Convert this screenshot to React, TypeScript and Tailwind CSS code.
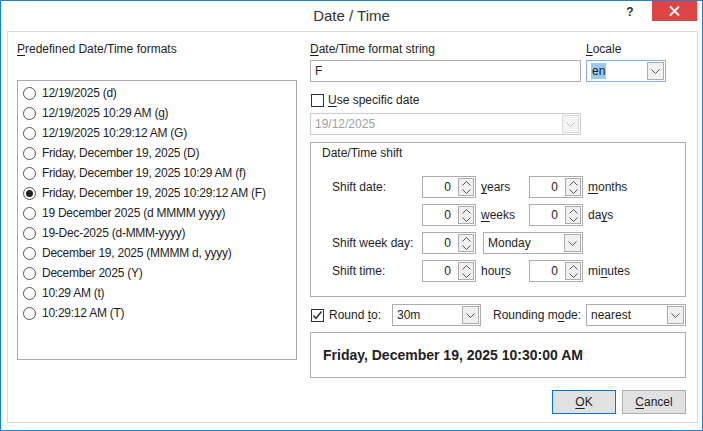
import React from "react";

const formats = [
  "12/19/2025 (d)",
  "12/19/2025 10:29 AM (g)",
  "12/19/2025 10:29:12 AM (G)",
  "Friday, December 19, 2025 (D)",
  "Friday, December 19, 2025 10:29 AM (f)",
  "Friday, December 19, 2025 10:29:12 AM (F)",
  "19 December 2025 (d MMMM yyyy)",
  "19-Dec-2025 (d-MMM-yyyy)",
  "December 19, 2025 (MMMM d, yyyy)",
  "December 2025 (Y)",
  "10:29 AM (t)",
  "10:29:12 AM (T)",
];

const U = ({ children }: { children: React.ReactNode }) => (
  <span className="underline underline-offset-[2px]">{children}</span>
);

const Chevron = ({ up = false }: { up?: boolean }) => (
  <svg width="9" height="5" viewBox="0 0 9 5">
    <path
      d={up ? "M0.5 4.5 L4.5 0.5 L8.5 4.5" : "M0.5 0.5 L4.5 4.5 L8.5 0.5"}
      fill="none"
      stroke="currentColor"
      strokeWidth="1"
    />
  </svg>
);

const Combo = ({
  value,
  className = "",
  focused = false,
  disabled = false,
}: {
  value: string;
  className?: string;
  focused?: boolean;
  disabled?: boolean;
}) => (
  <div
    className={`h-[22px] flex items-stretch border bg-white ${
      focused ? "border-[#7eb4ea]" : disabled ? "border-[#cccccc]" : "border-[#adadad]"
    } ${className}`}
  >
    <div className="flex-1 flex items-center pl-[4px]">
      <span
        className={
          focused
            ? "bg-[#99c9ef] px-[1px] leading-[16px]"
            : disabled
            ? "text-[#a0a0a0]"
            : ""
        }
      >
        {value}
      </span>
    </div>
    <div
      className={`m-px w-[17px] flex items-center justify-center border ${
        disabled
          ? "border-[#d9d9d9] bg-[#f4f4f4] text-[#bfbfbf]"
          : "border-[#adadad] bg-[#f0f0f0] text-[#555]"
      }`}
    >
      <Chevron />
    </div>
  </div>
);

const Spinner = () => (
  <div className="w-[54px] h-[22px] flex items-stretch border border-[#adadad] bg-white">
    <div className="flex-1 flex items-center justify-end pr-[6px]">0</div>
    <div className="m-px w-[16px] flex flex-col items-center justify-center gap-[3px] border border-[#adadad] bg-[#f0f0f0] text-[#555]">
      <Chevron up />
      <Chevron />
    </div>
  </div>
);

const CheckBox = ({ checked = false }: { checked?: boolean }) => (
  <div className="w-[13px] h-[13px] border border-[#333] bg-white flex items-center justify-center">
    {checked && (
      <svg width="11" height="11" viewBox="0 0 11 11">
        <path d="M1.5 5.5 L4 8.5 L9.5 1.5" fill="none" stroke="#222" strokeWidth="1.4" />
      </svg>
    )}
  </div>
);

const Radio = ({ checked = false }: { checked?: boolean }) => (
  <div className="w-[13px] h-[13px] rounded-full border border-[#555] bg-white flex items-center justify-center">
    {checked && <div className="w-[7px] h-[7px] rounded-full bg-[#222]" />}
  </div>
);

const App = () => {
  return (
    <div className="w-[703px] h-[431px] bg-white border border-[#1883d7] flex flex-col text-[12px] leading-[16px] text-[#1e1e1e] font-['Liberation_Sans',Arial,sans-serif]">
      {/* title bar */}
      <div className="h-[30px] grid grid-cols-[1fr_auto_1fr]">
        <div />
        <div className="flex items-center text-[15px] text-[#333]">Date / Time</div>
        <div className="flex justify-end items-start">
          <div className="w-[20px] h-[21px] mr-[12px] flex items-center justify-center font-bold text-[12px] text-[#333]">
            ?
          </div>
          <div className="w-[45px] h-[20px] mr-[5px] bg-[#e04343] flex items-center justify-center">
            <svg width="11" height="10" viewBox="0 0 11 10">
              <path d="M1 0.5 L10 9.5 M10 0.5 L1 9.5" stroke="white" strokeWidth="2" />
            </svg>
          </div>
        </div>
      </div>

      {/* panel */}
      <div className="ml-[6px] w-[691px] h-[392px] border border-[#dadada] bg-white flex pl-[9px] pt-[9px]">
        {/* left column */}
        <div className="w-[280px] flex flex-col">
          <div className="h-[16px]">
            <U>P</U>redefined Date/Time formats
          </div>
          <div className="mt-[23px] h-[280px] border border-[#a9a9a9] pt-[2px] pl-[5px] flex flex-col">
            {formats.map((f, i) => (
              <div key={f} className="h-[20px] flex items-center gap-[6px]">
                <Radio checked={i === 5} />
                <span className="tracking-[-0.25px]">{f}</span>
              </div>
            ))}
          </div>
        </div>

        {/* right column */}
        <div className="ml-[13px] w-[376px] flex flex-col">
          <div className="h-[16px] flex">
            <span className="w-[276px]">
              <U>D</U>ate/Time format string
            </span>
            <span>
              <U>L</U>ocale
            </span>
          </div>
          <div className="mt-[3px] flex">
            <div className="w-[271px] h-[22px] border border-[#adadad] bg-white flex items-center pl-[4px]">F</div>
            <Combo value="en" focused className="ml-[5px] w-[80px]" />
          </div>
          <div className="mt-[10px] h-[16px] flex items-center">
            <div className="ml-[1px]">
              <CheckBox />
            </div>
            <span className="ml-[4px]">
              <U>U</U>se specific date
            </span>
          </div>
          <Combo value="19/12/2025" disabled className="mt-[5px] w-[271px]" />

          {/* shift group */}
          <div className="mt-[7px] h-[155px] border border-[#adadad] flex flex-col">
            <div className="pl-[11px] pt-[2px] h-[18px]">Date/Time shift</div>
            <div className="mt-[15px] flex flex-col gap-[6px] pl-[21px]">
              <div className="h-[22px] flex items-center">
                <span className="w-[90px]">Shift date:</span>
                <Spinner />
                <span className="ml-[5px] w-[48px]">
                  <U>y</U>ears
                </span>
                <Spinner />
                <span className="ml-[5px]">
                  <U>m</U>onths
                </span>
              </div>
              <div className="h-[22px] flex items-center">
                <span className="w-[90px]" />
                <Spinner />
                <span className="ml-[5px] w-[48px]">
                  <U>w</U>eeks
                </span>
                <Spinner />
                <span className="ml-[5px]">
                  da<U>y</U>s
                </span>
              </div>
              <div className="h-[22px] flex items-center">
                <span className="w-[90px]">Shift week day:</span>
                <Spinner />
                <Combo value="Monday" className="ml-[7px] w-[100px]" />
              </div>
              <div className="h-[22px] flex items-center">
                <span className="w-[90px]">Shift time:</span>
                <Spinner />
                <span className="ml-[5px] w-[48px]">
                  hou<U>r</U>s
                </span>
                <Spinner />
                <span className="ml-[5px]">
                  mi<U>n</U>utes
                </span>
              </div>
            </div>
          </div>

          {/* rounding */}
          <div className="mt-[7px] h-[22px] flex items-center">
            <div className="ml-[1px]">
              <CheckBox checked />
            </div>
            <span className="ml-[5px] w-[63px]">
              Round <U>t</U>o:
            </span>
            <Combo value="30m" className="w-[89px]" />
            <span className="ml-[12px] w-[93px]">
              Rounding m<U>o</U>de:
            </span>
            <Combo value="nearest" className="w-[100px]" />
          </div>

          {/* result */}
          <div className="mt-[6px] h-[46px] border border-[#adadad] flex items-center pl-[12px] text-[14px] font-bold text-[#222]">
            Friday, December 19, 2025 10:30:00 AM
          </div>

          {/* buttons */}
          <div className="mt-[12px] flex justify-end gap-[6px]">
            <div className="w-[64px] h-[24px] border border-[#0078d7] bg-[#e1e1e1] flex items-center justify-center">
              <U>O</U>K
            </div>
            <div className="w-[64px] h-[24px] border border-[#adadad] bg-[#e1e1e1] flex items-center justify-center">
              <U>C</U>ancel
            </div>
          </div>
        </div>
      </div>
    </div>
  );
};

export default App;
